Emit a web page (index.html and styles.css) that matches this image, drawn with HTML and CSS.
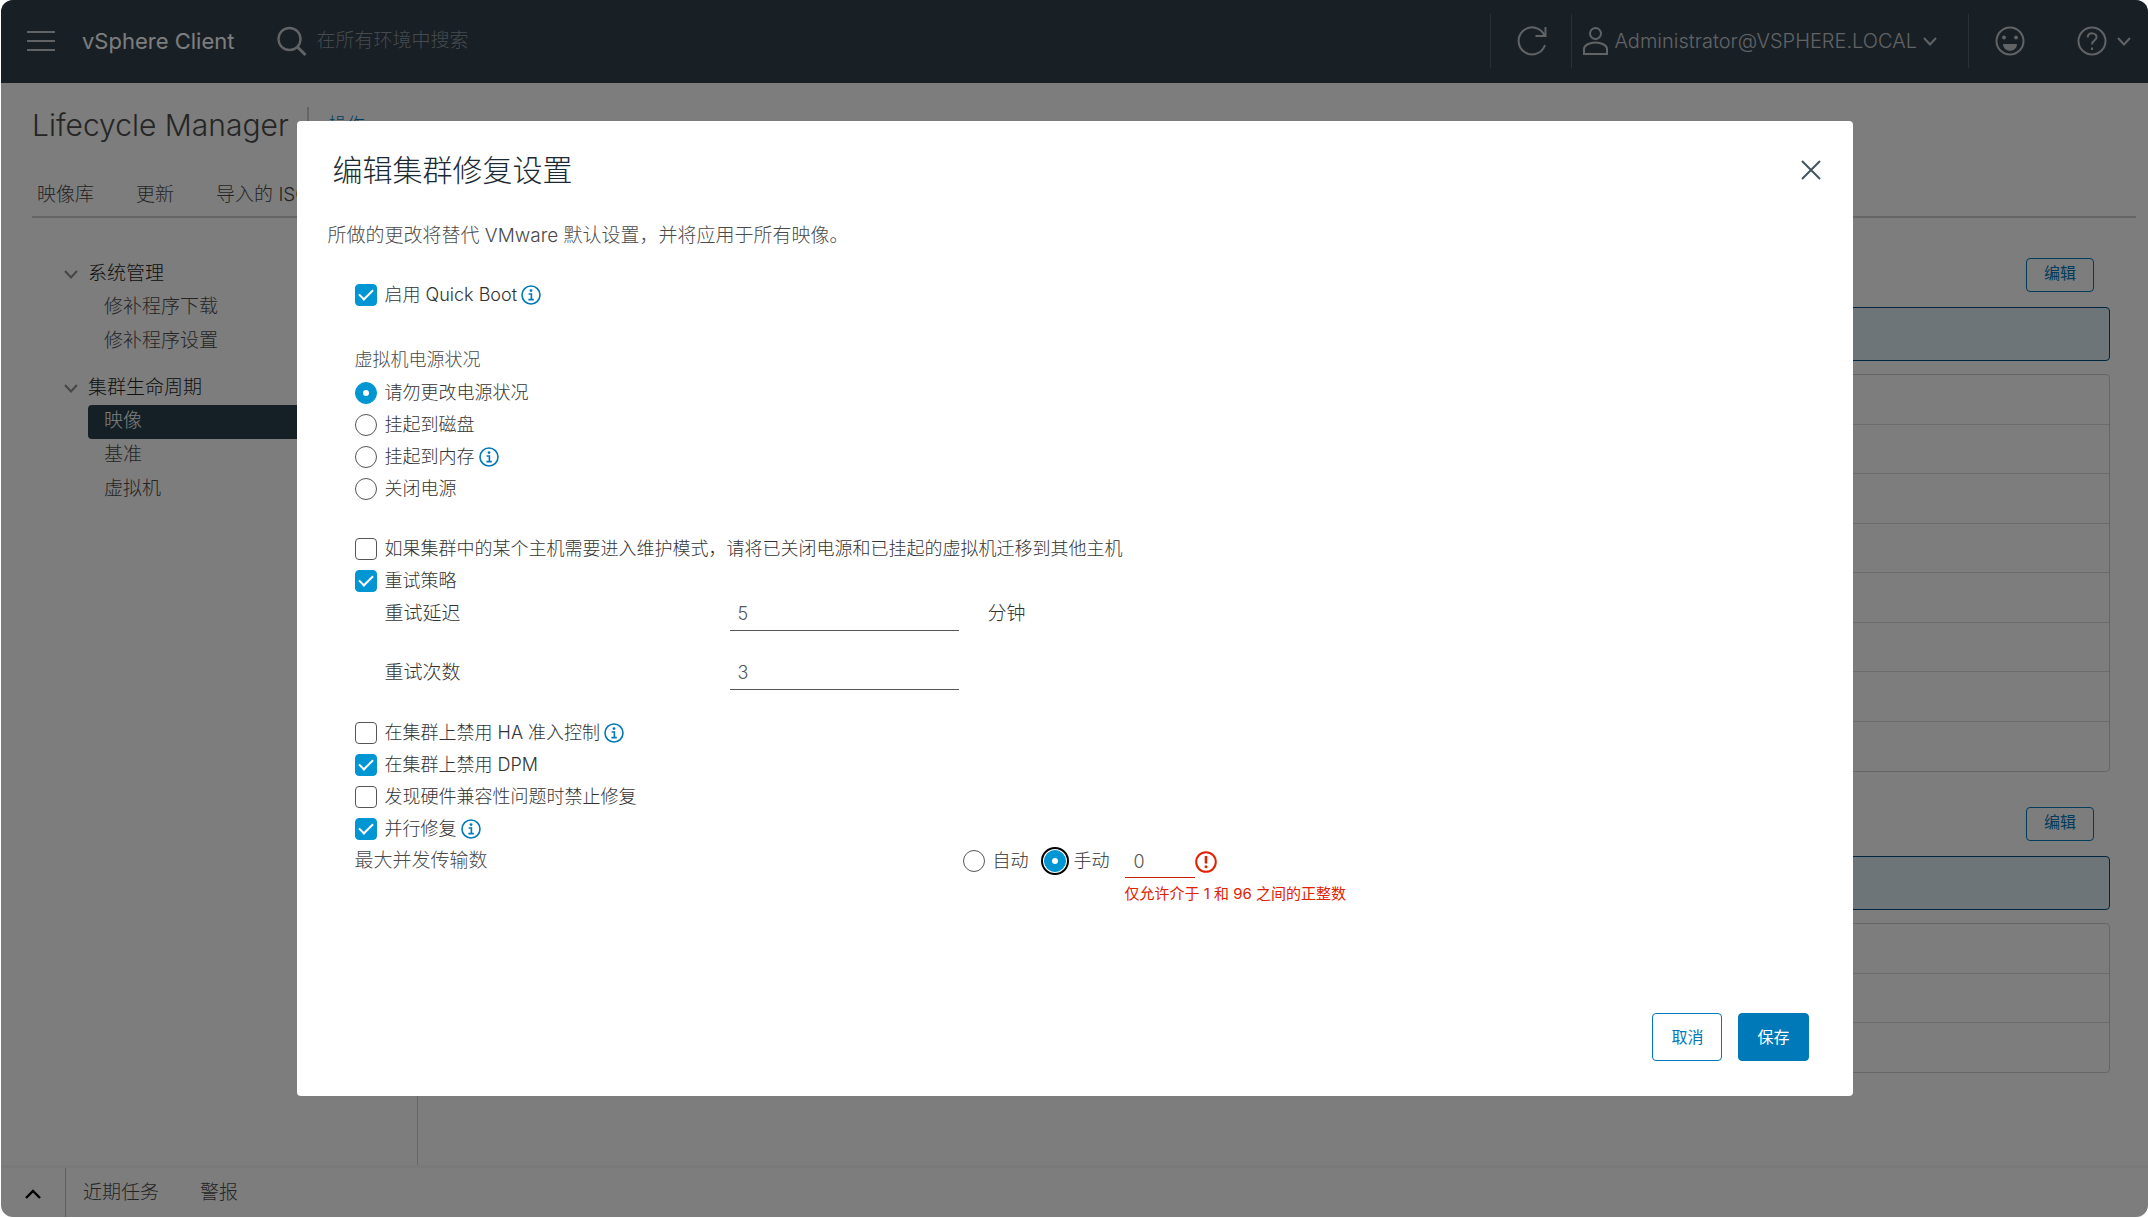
FILE: index.html
```html
<!DOCTYPE html>
<html lang="zh-CN">
<head>
<meta charset="utf-8">
<title>vSphere Client</title>
<link rel="stylesheet" href="styles.css">
</head>
<body>
<svg class="symbols">
  <symbol id="info" viewBox="0 0 20 20"><circle cx="10" cy="10" r="9" fill="none" stroke="currentColor" stroke-width="1.600"/><circle cx="10" cy="5.600" r="1.400" fill="currentColor"/><path d="M7.600 9h2.800v5.400M7.400 14.600h5.400" fill="none" stroke="currentColor" stroke-width="1.600"/></symbol>
  <symbol id="chevron" viewBox="0 0 14 9"><path d="M1 1l6 6.500L13 1" fill="none" stroke="currentColor" stroke-width="2"/></symbol>
</svg>
<div class="app">
  <header class="topbar">
    <button class="icon-btn" aria-label="菜单"><svg width="28" height="22" viewBox="0 0 28 22"><path d="M0 2h28M0 11h28M0 20h28" stroke="currentColor" stroke-width="2"/></svg></button>
    <span class="brand">vSphere Client</span>
    <div class="search">
      <svg width="30" height="30" viewBox="0 0 30 30" fill="none" stroke="currentColor"><circle cx="12.500" cy="13" r="11" stroke-width="2.400"/><path d="M20.500 21l8 8" stroke-width="3"/></svg>
      <input type="text" aria-label="搜索" placeholder="在所有环境中搜索">
    </div>
    <div class="refresh">
      <button class="icon-btn" aria-label="刷新"><svg width="30" height="30" viewBox="0 0 30 30" fill="none" stroke="currentColor" stroke-width="2"><path d="M28 19A13.500 13.500 0 1 1 27.500 9.500M28.500 1v9h-10"/></svg></button>
    </div>
    <button class="user">
      <svg width="25" height="28" viewBox="0 0 25 28" fill="none" stroke="currentColor" stroke-width="2"><circle cx="12.500" cy="6.500" r="5.500"/><path d="M1 27v-5c0-4 6-6.500 11.500-6.500S24 18 24 22v5z"/></svg>
      <span>Administrator@VSPHERE.LOCAL</span>
      <svg width="14" height="9"><use href="#chevron"/></svg>
    </button>
    <div class="tools">
      <button class="icon-btn" aria-label="反馈"><svg width="30" height="30" viewBox="0 0 30 30"><circle cx="15" cy="15" r="13.500" fill="none" stroke="currentColor" stroke-width="2"/><circle cx="9" cy="11.500" r="2" fill="currentColor"/><circle cx="21" cy="11.500" r="2" fill="currentColor"/><path d="M8 18h14c0 9-14 9-14 0z" fill="currentColor"/></svg></button>
      <button class="icon-btn help" aria-label="帮助"><svg width="30" height="30" viewBox="0 0 30 30" fill="none" stroke="currentColor" stroke-width="2"><circle cx="15" cy="15" r="13.500"/><path d="M10.500 11.500c1-6 9.500-5 9 0-.3 3-4.500 3-4.500 7"/><path d="M15 21.500v2.500"/></svg><svg width="14" height="9"><use href="#chevron"/></svg></button>
    </div>
  </header>

  <div class="heading">
    <h1>Lifecycle Manager</h1>
    <a class="actions" href="#">操作</a>
  </div>
  <nav class="tabs">
    <a href="#">映像库</a><a href="#">更新</a><a href="#">导入的 ISO</a>
  </nav>

  <div class="workspace">
    <nav class="sidebar">
      <section>
        <h2><svg width="14" height="9"><use href="#chevron"/></svg>系统管理</h2>
        <a href="#">修补程序下载</a>
        <a href="#">修补程序设置</a>
      </section>
      <section>
        <h2><svg width="14" height="9"><use href="#chevron"/></svg>集群生命周期</h2>
        <a class="active" href="#">映像</a>
        <a href="#">基准</a>
        <a href="#">虚拟机</a>
      </section>
    </nav>
    <main class="content">
      <section class="settings">
        <div class="settings-bar"><button>编辑</button></div>
        <div class="notice"></div>
        <ul class="rows"><li></li><li></li><li></li><li></li><li></li><li></li><li></li><li></li></ul>
      </section>
      <section class="settings">
        <div class="settings-bar"><button>编辑</button></div>
        <div class="notice"></div>
        <ul class="rows"><li></li><li></li><li></li></ul>
      </section>
    </main>
  </div>

  <footer class="tasks">
    <button class="expand" aria-label="展开"><svg width="16" height="10" viewBox="0 0 16 10"><path d="M1 9l7-7 7 7" fill="none" stroke="currentColor" stroke-width="2.400"/></svg></button>
    <a href="#">近期任务</a>
    <a href="#">警报</a>
  </footer>

  <div class="backdrop">
    <form class="modal" role="dialog" aria-labelledby="modal-title">
      <div class="modal-head">
        <h2 id="modal-title">编辑集群修复设置</h2>
        <button type="button" class="close" aria-label="关闭"><svg width="20" height="20" viewBox="0 0 20 20"><path d="M1 1l18 18M19 1L1 19" stroke="currentColor" stroke-width="2"/></svg></button>
      </div>
      <p class="intro">所做的更改将替代 VMware 默认设置，并将应用于所有映像。</p>
      <div class="fields">
        <div class="opt"><input type="checkbox" id="quick" checked><label for="quick">启用 Quick Boot</label><svg class="info"><use href="#info"/></svg></div>

        <fieldset class="group">
          <legend>虚拟机电源状况</legend>
          <div class="opt"><input type="radio" name="power" id="p1" checked><label for="p1">请勿更改电源状况</label></div>
          <div class="opt"><input type="radio" name="power" id="p2"><label for="p2">挂起到磁盘</label></div>
          <div class="opt"><input type="radio" name="power" id="p3"><label for="p3">挂起到内存</label><svg class="info"><use href="#info"/></svg></div>
          <div class="opt"><input type="radio" name="power" id="p4"><label for="p4">关闭电源</label></div>
        </fieldset>

        <div class="group retry">
          <div class="opt"><input type="checkbox" id="migrate"><label for="migrate">如果集群中的某个主机需要进入维护模式，请将已关闭电源和已挂起的虚拟机迁移到其他主机</label></div>
          <div class="opt"><input type="checkbox" id="retry" checked><label for="retry">重试策略</label></div>
          <div class="field"><label for="delay">重试延迟</label><input type="text" id="delay" value="5"><span>分钟</span></div>
          <div class="field"><label for="count">重试次数</label><input type="text" id="count" value="3"></div>
        </div>

        <div class="group">
          <div class="opt"><input type="checkbox" id="ha"><label for="ha">在集群上禁用 HA 准入控制</label><svg class="info"><use href="#info"/></svg></div>
          <div class="opt"><input type="checkbox" id="dpm" checked><label for="dpm">在集群上禁用 DPM</label></div>
          <div class="opt"><input type="checkbox" id="hcl"><label for="hcl">发现硬件兼容性问题时禁止修复</label></div>
          <div class="opt"><input type="checkbox" id="parallel" checked><label for="parallel">并行修复</label><svg class="info"><use href="#info"/></svg></div>
          <div class="transfers">
            <span class="name">最大并发传输数</span>
            <div class="opt"><input type="radio" name="max" id="auto"><label for="auto">自动</label></div>
            <div class="opt manual"><input class="focused" type="radio" name="max" id="manual" checked><label for="manual">手动</label></div>
            <div class="limit">
              <div class="limit-row">
                <input type="text" aria-label="最大并发传输数" aria-describedby="limit-error" value="0">
                <svg width="22" height="22" viewBox="0 0 22 22"><circle cx="11" cy="11" r="9.800" fill="none" stroke="currentColor" stroke-width="2"/><path d="M11 5v7.500" stroke="currentColor" stroke-width="2.600"/><circle cx="11" cy="15.800" r="1.500" fill="currentColor"/></svg>
              </div>
              <span id="limit-error" class="error">仅允许介于 1 和 96 之间的正整数</span>
            </div>
          </div>
        </div>
      </div>
      <div class="modal-foot">
        <button type="button">取消</button>
        <button type="submit" class="primary">保存</button>
      </div>
    </form>
  </div>
</div>
</body>
</html>
```
FILE: styles.css
```css
* { box-sizing: border-box; }
body {
  margin: 0;
  background: #fff;
  color: #4a4a4a;
  font: 300 19px/24px "Inter", "Noto Sans CJK SC", sans-serif;
}
h1, h2, p, ul, fieldset, legend { margin: 0; padding: 0; border: 0; font-weight: 300; }
ul { list-style: none; }
a { color: inherit; text-decoration: none; }
button { font: inherit; color: inherit; background: none; border: 0; padding: 0; }
input { font: inherit; color: inherit; margin: 0; border-radius: 0; }
svg { flex: none; }
.symbols { display: none; }

.app {
  position: relative;
  display: flex;
  flex-direction: column;
  min-height: calc(100vh - 1px);
  margin-left: 1px;
  background: #fafafa;
  border-radius: 12px;
  overflow: hidden;
}

/* top bar */
.topbar {
  display: flex;
  align-items: center;
  height: 83px;
  padding: 0 17px 1px 26px;
  background: #303e4a;
  color: #c2c6ca;
}
.icon-btn { display: flex; align-items: center; }
.brand { margin: 0 43px 0 27px; color: #fafafa; font-size: 22px; font-weight: 400; }
.search { flex: 1; display: flex; align-items: center; gap: 9px; }
.search input { width: 320px; padding: 0; border: 0; background: none; }
.search input::placeholder { color: #8c959e; opacity: 1; }
.refresh, .user, .tools { height: 54px; display: flex; align-items: center; border-left: 1px solid #505e6b; }
.refresh { padding: 0 24px 0 26px; }
.user { gap: 6px; padding: 0 31px 0 11px; font-size: 20px; }
.tools { gap: 52px; padding-left: 26px; }
.help { gap: 10px; }

/* heading and tabs */
.heading { display: flex; align-items: center; padding: 24px 31px 0; }
.heading h1 { padding-right: 18px; border-right: 2px solid #ccc; font-size: 30px; line-height: 36px; }
.actions { margin-left: 20px; color: #0079b8; font-size: 18px; }
.tabs {
  display: flex;
  gap: 42px;
  margin: 40px 12px 0 31px;
  padding: 0 5px 9px;
  border-bottom: 2px solid #ccc;
}

/* workspace */
.workspace { flex: 1; display: flex; }
.sidebar { width: 417px; padding: 39px 0 0 63px; border-right: 1px solid #ccc; }
.sidebar section { margin-bottom: 12px; }
.sidebar h2 { display: flex; align-items: center; gap: 10px; font-size: 19px; line-height: 34px; color: #222; }
.sidebar h2 svg { color: #8c8c8c; }
.sidebar a { display: block; margin-left: 24px; padding: 1px 16px 3px; line-height: 30px; border-radius: 4px; }
.sidebar .active { background: #29414d; color: #fafafa; }
.content { flex: 1; padding: 40px 38px 0 40px; }
.settings { margin-bottom: 35px; }
.settings-bar { display: flex; justify-content: flex-end; padding-right: 16px; }
.settings-bar button { padding: 2px 17px 6px; border: 1px solid #0079b8; border-radius: 4px; color: #0079b8; font-size: 16px; line-height: 24px; font-weight: 400; }
.notice { height: 54px; margin: 15px 0 13px; border: 1px solid #004a80; border-radius: 4px; background: #daeaf0; }
.rows { border: 1px solid #ccc; border-radius: 4px; }
.rows li { height: 50px; border-bottom: 1px solid #d8d8d8; }
.rows li:nth-child(even) { height: 49px; }
.rows li:last-child { height: 49px; border: 0; }

/* bottom bar */
.tasks { display: flex; align-items: center; height: 52px; border-top: 3px solid #f3f3f3; }
.tasks a { margin: 0 41px 0 0; }
.expand { height: 49px; margin-right: 17px; padding: 0 24px; border-right: 1px solid #bbb; color: #000; }

/* dialog */
.backdrop {
  position: absolute;
  inset: 0;
  display: flex;
  align-items: center;
  justify-content: center;
  background: rgba(0, 0, 0, .5);
}
.modal {
  display: flex;
  flex-direction: column;
  width: 90%;
  max-width: 1556px;
  min-height: 80vh;
  padding: 31px 44px 35px 31px;
  background: #fff;
  border-radius: 4px;
}
.modal-head { display: flex; align-items: center; justify-content: space-between; margin: 0 -14px 0 5px; }
.modal-head h2 { font-size: 30px; line-height: 36px; color: #1b2a32; }
.close { display: flex; color: #42545e; margin-right: 2px; }
.intro { margin: 36px 0 31px; }
.fields { flex: 1; padding-left: 27px; font-size: 18px; color: #333; }
.opt { display: flex; align-items: center; height: 32px; }
.opt label { margin-left: 8px; line-height: 32px; padding-bottom: 1px; }
.info { width: 20px; height: 20px; margin-left: 4px; color: #0079b8; }
.group { margin-top: 32px; }
.group legend { line-height: 34px; color: #4a4a4a; }
.opt input {
  appearance: none;
  display: grid;
  place-items: center;
  width: 22px;
  height: 22px;
  border: 1px solid #565656;
  background: #fff;
}
.opt input[type="checkbox"] { border-radius: 4px; }
.opt input[type="radio"] { border-radius: 50%; }
.opt input:checked { border-color: #0095d3; background: #0095d3; }
.opt input[type="checkbox"]:checked::before {
  content: "";
  width: 12px;
  height: 6px;
  margin-bottom: 4px;
  border: solid #fff;
  border-width: 0 0 2px 2px;
  rotate: -45deg;
}
.opt input[type="radio"]:checked::before { content: ""; width: 6px; height: 6px; border-radius: 50%; background: #fff; }
.opt .focused { outline: 2px solid #000; outline-offset: 1px; }
.retry { margin-top: 28px; }
.field { display: flex; height: 33px; margin: 1px 0 26px 30px; font-size: 19px; }
.field label { width: 345px; line-height: 32px; }
.field input { width: 229px; padding: 0 8px; border: 0; border-bottom: 1px solid #565656; background: none; color: #565656; font-size: 18px; }
.field span { margin-left: 29px; line-height: 32px; }
.retry + .group { margin-top: 27px; }
.transfers { display: flex; align-items: flex-start; height: 62px; }
.transfers .name { width: 608px; font-size: 19px; line-height: 32px; color: #4a4a4a; }
.manual { margin-left: 15px; }
.limit { margin-left: 15px; color: #e12200; }
.limit-row { display: flex; align-items: center; height: 33px; }
.limit input { width: 70px; height: 33px; padding: 0 9px; border: 0; border-bottom: 1px solid #c92100; color: #565656; background: none; }
.error { display: block; font-size: 15px; line-height: 32px; font-weight: 400; }
.modal-foot { display: flex; justify-content: flex-end; gap: 16px; font-size: 16px; font-weight: 400; }
.modal-foot button { padding: 11px 18px; border: 1px solid #0079b8; border-radius: 4px; color: #0079b8; }
.modal-foot .primary { background: #0079b8; color: #fff; }
```
